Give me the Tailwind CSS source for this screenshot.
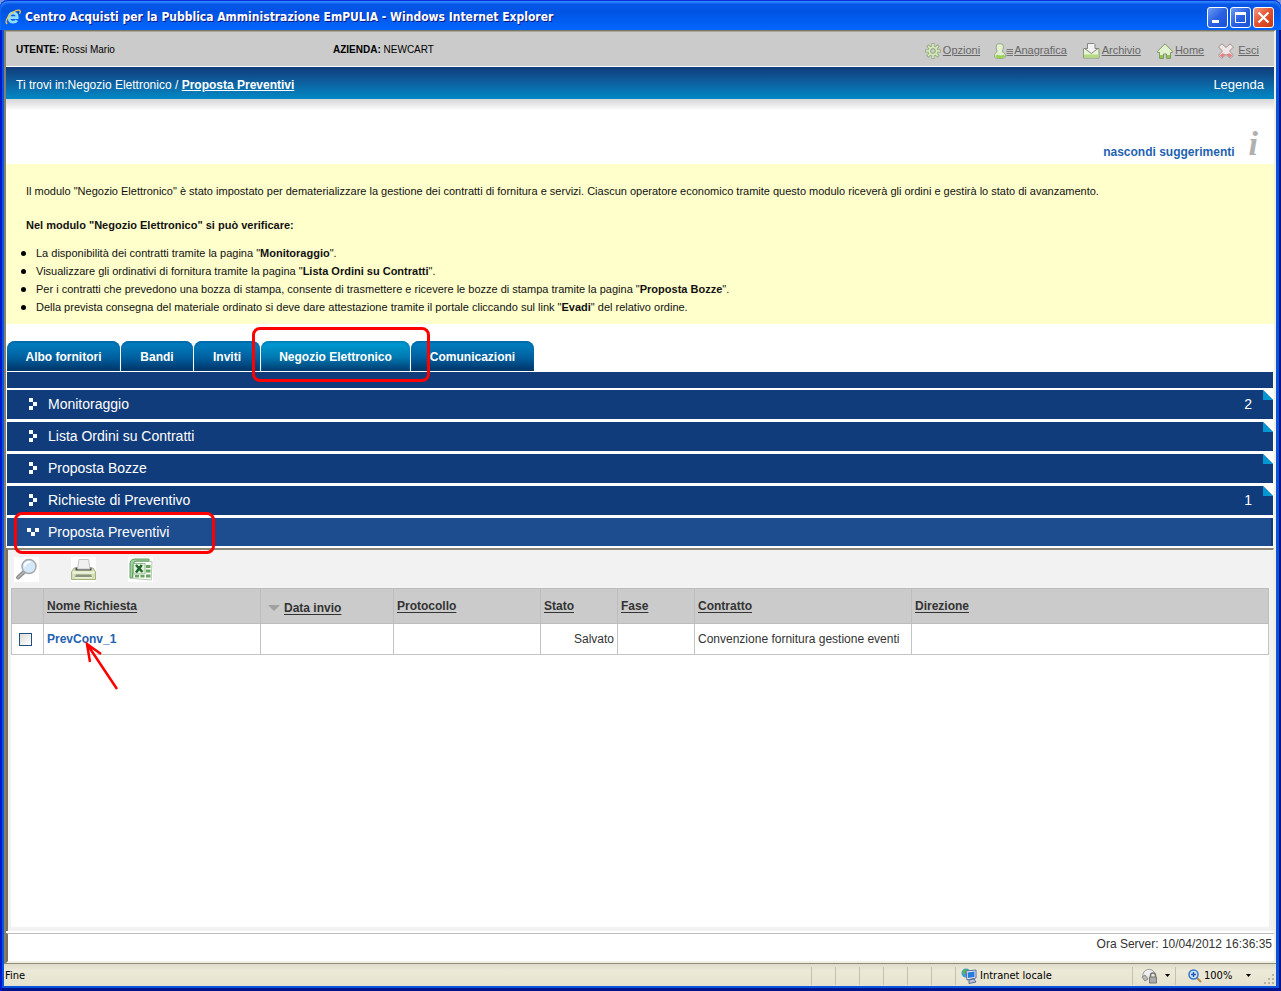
<!DOCTYPE html>
<html lang="it">
<head>
<meta charset="utf-8">
<title>Centro Acquisti per la Pubblica Amministrazione EmPULIA</title>
<script src="https://cdn.jsdelivr.net/npm/@tailwindcss/browser@4"></script>
</head>
<body class="bg-[#7a96df] font-['Liberation_Sans',Arial,sans-serif] text-xs text-black">
<div class="flex min-h-screen flex-col rounded-t-lg bg-[#0855dd] shadow-[inset_2px_0_0_#0019cf,inset_-2px_0_0_#00138c,inset_0_-3px_0_#00138c]">

  <!-- Title bar -->
  <header class="flex h-[30px] shrink-0 items-center rounded-t-lg bg-linear-to-b from-[#0a58e8] from-0% via-[#0054e3] via-40% to-[#0266ff] px-[5px] pt-1 shadow-[inset_0_1px_0_#0831d9,inset_0_3px_2px_#2f87ff]">
    <svg class="mr-1 size-4 shrink-0" viewBox="0 0 16 16" fill="none" aria-hidden="true">
      <path d="M4 8.600H12.200C12.200 5.600 10.500 4 8.100 4S3.900 6 3.900 8.700 5.700 13.200 8.200 13.200c1.800 0 3-.8 3.700-2" stroke="#8fdcff" stroke-width="2.800"/>
      <path d="M2.200 15C-.8 13 3 6.500 8.500 3 12 .8 15.300 .5 15.300 2.500c0 .8-.3 1.600-.8 2.400" stroke="#f5c842" stroke-width="1.300"/>
    </svg>
    <h1 class="flex-1 truncate font-['DejaVu_Sans_Condensed','DejaVu_Sans',sans-serif] text-xs leading-5 font-bold text-white [text-shadow:1px_1px_0_#0a1883]">Centro Acquisti per la Pubblica Amministrazione EmPULIA - Windows Internet Explorer</h1>
    <div class="flex gap-0.5 pr-0.5">
      <button aria-label="Riduci a icona" class="flex size-[21px] items-center justify-center rounded-[3px] border border-white bg-linear-to-br from-[#6f9cf5] via-[#2a61e2] to-[#1c4fd6]"><svg class="size-[19px]" viewBox="0 0 19 19"><path d="M4 12h7v3H4z" fill="#fff"/></svg></button>
      <button aria-label="Ingrandisci" class="flex size-[21px] items-center justify-center rounded-[3px] border border-white bg-linear-to-br from-[#6f9cf5] via-[#2a61e2] to-[#1c4fd6]"><svg class="size-[19px]" viewBox="0 0 19 19" fill="none"><path d="M4.500 5v9.500h10V5" stroke="#fff"/><path d="M4 5.500h11" stroke="#fff" stroke-width="3"/></svg></button>
      <button aria-label="Chiudi" class="flex size-[21px] items-center justify-center rounded-[3px] border border-white bg-linear-to-br from-[#f09a80] via-[#e2502c] to-[#c83a10]"><svg class="size-[19px]" viewBox="0 0 19 19"><path d="M4.500 4.500l10 10M14.500 4.500l-10 10" stroke="#fff" stroke-width="2.200"/></svg></button>
    </div>
  </header>

  <div class="mr-[5px] mb-[5px] ml-1 flex flex-1 flex-col bg-[#ece9d8]">
    <div class="flex flex-1 flex-col border-t border-r-2 border-l-2 border-t-[#7c7766] border-r-[#f1efe2] border-l-[#857f6f] bg-white">

      <!-- User bar -->
      <div class="flex h-[35px] items-center border-t border-[#aca899] bg-[#cbcbcb] text-[10px]">
        <p class="w-[317px] pt-px pl-[10px]"><b>UTENTE:</b> Rossi Mario</p>
        <p class="ml-[10px] flex-1 pt-px"><b>AZIENDA:</b> NEWCART</p>
        <nav class="flex items-center gap-3 pt-[3px] pr-[15px] text-[11px] text-[#666]">
          <a href="#" class="mr-0.5 flex items-center gap-0.5 underline"><svg class="size-4" viewBox="0 0 16 16" fill="none" aria-hidden="true"><g stroke="#8fa67a" stroke-width="3"><path d="M8 0v16M0 8h16M2.400 2.400l11.200 11.200M13.600 2.400L2.400 13.600"/></g><circle cx="8" cy="8" r="5.300" fill="#8fa67a"/><g stroke="#dcecc8" stroke-width="1.600"><path d="M8 .8v14.400M.8 8h14.400M3 3l10 10M13 3L3 13"/></g><circle cx="8" cy="8" r="4.600" fill="#d3eab4"/><circle cx="8" cy="8" r="2.400" fill="#cbcbcb" stroke="#8fa67a"/></svg>Opzioni</a>
          <a href="#" class="flex items-center underline"><svg class="h-4 w-[20px]" viewBox="0 0 20 16" aria-hidden="true"><path d="M4 .8h3C9 .8 9.500 2.500 9.300 5 9.100 7 8.200 7.500 8.400 9c1 .8 3.100.8 3.100 4 0 2-1.500 2.500-5.500 2.500S.5 15 .5 13c0-3 1.500-3.300 2.500-4.300C3.500 7.500 2.200 7 2.200 4.500c0-2 .8-3.700 1.800-3.700z" fill="#e4efd2" stroke="#95a781"/><path d="M2 12.800c2 1.500 6 1.500 8.500 0" stroke="#9ad257" stroke-width="3" fill="none"/><path d="M12.500 6.500H19M12.500 8.500H19M12.500 10.500H19M12.500 12.500H19" stroke="#777"/></svg>Anagrafica</a>
          <a href="#" class="ml-1 flex items-center gap-0.5 underline"><svg class="h-4 w-[17px]" viewBox="0 0 17 16" fill="none" aria-hidden="true"><path d="M.5 5.500h15.500v9.500H.5z" fill="#e8f3d8" stroke="#8a9a7a"/><path d="M1 11.500h14.500v3H1z" fill="#b4dc7d"/><path d="M4.500 5.500h-3L8.300 10.500l6.700-5h-3V1.500l-1-1h-6.500z" fill="#f2f2f2" stroke="#858585"/></svg>Archivio</a>
          <a href="#" class="ml-1 flex items-center gap-0.5 underline"><svg class="size-4" viewBox="0 0 16 16" aria-hidden="true"><path d="M8 .8l7.300 7.300v1.400h-1.800v6h-4V11h-3v4.500h-4v-6H.7V8.100z" fill="#e2f1cd" stroke="#829567"/><path d="M3 12h3v3H3zM10 12h3v3h-3z" fill="#8cc94a"/></svg>Home</a>
          <a href="#" class="ml-0.5 flex items-center gap-1 underline"><svg class="size-4" viewBox="0 0 16 16" aria-hidden="true"><path d="M4 .8L8 4.500 12 .8 15.500 4 11.500 8l4 4.300-3.300 3L8 11.500l-4.200 3.800-3.300-3L4.500 8 .5 4z" fill="#f0e6e6" stroke="#a09090" stroke-linejoin="round"/><path d="M4.800 10.300l-3.300 2L4 14.500 7.500 11.200zM11.200 10.300l3.300 2-2.500 2.200-3.500-3.300z" fill="#e88080"/></svg>Esci</a>
        </nav>
      </div>

      <!-- Breadcrumb -->
      <div class="mt-px flex h-8 items-center justify-between bg-linear-to-b from-[#103c7b] to-[#0089c6] px-[10px] pt-1 text-xs text-white">
        <p>Ti trovi in:Negozio Elettronico / <a href="#" class="font-bold underline">Proposta Preventivi</a></p>
        <a href="#" class="text-[13px]">Legenda</a>
      </div>
      <div class="h-3 bg-linear-to-b from-[#d6d6d6] to-white"></div>
      <div class="flex h-[53px] items-end justify-end gap-[14px] pr-4 pb-1">
        <a href="#" class="text-xs leading-4 font-bold text-[#1f62b0]">nascondi suggerimenti</a>
        <span aria-hidden="true" class="pb-0.5 font-['Liberation_Serif',serif] text-[34px] leading-7 font-bold text-[#b0b0b0] italic">i</span>
      </div>

      <!-- Hints -->
      <section class="h-40 bg-[#ffffcc] pt-5 pl-5 text-[11px] leading-[14px] text-[#111]">
        <p>Il modulo "Negozio Elettronico" è stato impostato per dematerializzare la gestione dei contratti di fornitura e servizi. Ciascun operatore economico tramite questo modulo riceverà gli ordini e gestirà lo stato di avanzamento.</p>
        <p class="mt-5 font-bold">Nel modulo "Negozio Elettronico" si può verificare:</p>
        <ul class="mt-3 leading-[18px]">
          <li class="flex items-center"><i class="mr-[10px] -ml-[5px] size-[5px] rounded-full bg-black"></i><span>La disponibilità dei contratti tramite la pagina "<b>Monitoraggio</b>".</span></li>
          <li class="flex items-center"><i class="mr-[10px] -ml-[5px] size-[5px] rounded-full bg-black"></i><span>Visualizzare gli ordinativi di fornitura tramite la pagina "<b>Lista Ordini su Contratti</b>".</span></li>
          <li class="flex items-center"><i class="mr-[10px] -ml-[5px] size-[5px] rounded-full bg-black"></i><span>Per i contratti che prevedono una bozza di stampa, consente di trasmettere e ricevere le bozze di stampa tramite la pagina "<b>Proposta Bozze</b>".</span></li>
          <li class="flex items-center"><i class="mr-[10px] -ml-[5px] size-[5px] rounded-full bg-black"></i><span>Della prevista consegna del materiale ordinato si deve dare attestazione tramite il portale cliccando sul link "<b>Evadi</b>" del relativo ordine.</span></li>
        </ul>
      </section>

      <!-- Tabs -->
      <nav class="mt-[17px] ml-px flex h-[30px] gap-px text-xs font-bold text-white">
        <button class="w-[113px] rounded-t-lg bg-linear-to-b from-[#0083c4] via-[#00609f] via-55% to-[#003468] pt-px shadow-[inset_0_2px_2px_#0068a8]">Albo fornitori</button>
        <button class="w-[72px] rounded-t-lg bg-linear-to-b from-[#0083c4] via-[#00609f] via-55% to-[#003468] pt-px shadow-[inset_0_2px_2px_#0068a8]">Bandi</button>
        <button class="w-[66px] rounded-t-lg bg-linear-to-b from-[#0083c4] via-[#00609f] via-55% to-[#003468] pt-px shadow-[inset_0_2px_2px_#0068a8]">Inviti</button>
        <button class="relative w-[149px] rounded-t-lg bg-linear-to-b from-[#00a0d8] via-[#0078b0] via-55% to-[#003c70] pt-px shadow-[inset_0_2px_2px_#0080b8]">Negozio Elettronico<span class="absolute -top-[14px] -right-5 -bottom-[11px] -left-[9px] z-10 rounded-lg border-[3px] border-[#f00]"></span></button>
        <button class="w-[123px] rounded-t-lg bg-linear-to-b from-[#0083c4] via-[#00609f] via-55% to-[#003468] pt-px shadow-[inset_0_2px_2px_#0068a8]">Comunicazioni</button>
      </nav>
      <div class="mx-px mt-px h-4 bg-[#103c7b]"></div>

      <!-- Sections -->
      <div class="mx-px mt-0.5 flex flex-col gap-[3px] text-sm leading-[18px] text-white">
        <button class="relative flex h-[29px] items-center bg-[#103c7b] pr-[21px] pb-px pl-[22px] text-left"><svg class="mr-[11px] h-3 w-2" viewBox="0 0 8 12" fill="#fff"><path d="M0 0h4v4H0zM4 4h4v4H4zM0 8h4v4H0z"/></svg><span class="flex-1">Monitoraggio</span><span>2</span><svg class="absolute top-0 right-0 size-[10px]" viewBox="0 0 10 10"><path d="M0 0h10v10z" fill="#fff"/><path d="M0 0l10 10H0z" fill="#0095d3"/></svg></button>
        <button class="relative flex h-[29px] items-center bg-[#103c7b] pr-[21px] pb-px pl-[22px] text-left"><svg class="mr-[11px] h-3 w-2" viewBox="0 0 8 12" fill="#fff"><path d="M0 0h4v4H0zM4 4h4v4H4zM0 8h4v4H0z"/></svg><span class="flex-1">Lista Ordini su Contratti</span><svg class="absolute top-0 right-0 size-[10px]" viewBox="0 0 10 10"><path d="M0 0h10v10z" fill="#fff"/><path d="M0 0l10 10H0z" fill="#0095d3"/></svg></button>
        <button class="relative flex h-[29px] items-center bg-[#103c7b] pr-[21px] pb-px pl-[22px] text-left"><svg class="mr-[11px] h-3 w-2" viewBox="0 0 8 12" fill="#fff"><path d="M0 0h4v4H0zM4 4h4v4H4zM0 8h4v4H0z"/></svg><span class="flex-1">Proposta Bozze</span><svg class="absolute top-0 right-0 size-[10px]" viewBox="0 0 10 10"><path d="M0 0h10v10z" fill="#fff"/><path d="M0 0l10 10H0z" fill="#0095d3"/></svg></button>
        <button class="relative flex h-[29px] items-center bg-[#103c7b] pr-[21px] pb-px pl-[22px] text-left"><svg class="mr-[11px] h-3 w-2" viewBox="0 0 8 12" fill="#fff"><path d="M0 0h4v4H0zM4 4h4v4H4zM0 8h4v4H0z"/></svg><span class="flex-1">Richieste di Preventivo</span><span>1</span><svg class="absolute top-0 right-0 size-[10px]" viewBox="0 0 10 10"><path d="M0 0h10v10z" fill="#fff"/><path d="M0 0l10 10H0z" fill="#0095d3"/></svg></button>
        <button class="relative flex h-7 items-center border-r-2 border-[#103c7b] bg-[#1e4d8f] pl-5 text-left"><svg class="mr-[9px] h-2 w-3" viewBox="0 0 12 8" fill="#fff"><path d="M0 0h4v4H0zM4 4h4v4H4zM8 0h4v4H8z"/></svg><span>Proposta Preventivi</span><span class="absolute -top-[6px] left-[7px] z-10 h-[42px] w-[201px] rounded-lg border-[3px] border-[#f00]"></span></button>
      </div>

      <!-- Results panel -->
      <main class="mt-0.5 flex flex-1 flex-col border-t-2 border-r border-l-2 border-t-[#8b8675] border-r-[#f1efe2] border-l-[#77705f] bg-[#f2f2f2] pr-1 pb-1 pl-[3px]">
        <div class="flex h-[38px] items-center gap-8 pl-[3px]">
          <button aria-label="Cerca" class="flex h-[25px] w-[25px] items-center bg-white"><svg class="size-[25px]" viewBox="0 0 25 25" fill="none"><path d="M10.500 14.500L4 20.500" stroke="#8f8f8f" stroke-width="4" stroke-linecap="round"/><path d="M10.500 14.500L4 20.500" stroke="#b5b5b5" stroke-width="1.500" stroke-linecap="round"/><circle cx="15" cy="9.500" r="7" fill="#d3e9fb" stroke="#a8a8a8" stroke-width="1.500"/><path d="M10.500 9.500a5 5 0 0 1 6-4.500" stroke="#fff" stroke-width="2"/></svg></button>
          <button aria-label="Stampa" class="flex h-[25px] w-[25px] items-center bg-white"><svg class="size-[25px]" viewBox="0 0 25 25"><path d="M3 11h19l2.500 4v7.500H.5V15z" fill="#d3e0b4" stroke="#a4b183"/><path d="M4.500 10.500h16v3h-16z" fill="#4a4a4a"/><path d="M6.500 12L8 2.500h9.500L19 12z" fill="#f0f0f0" stroke="#c4c4c4"/><path d="M1.500 14.500h22v2h-22z" fill="#eef4df"/><path d="M5 17.500h15l1 2.500H4z" fill="#8d927f"/><path d="M4 20h17v1.500H4z" fill="#e9f0d8"/></svg></button>
          <button aria-label="Esporta in Excel" class="flex h-[25px] w-[25px] items-center bg-white"><svg class="size-[25px]" viewBox="0 0 25 25"><path d="M6 4.500h18l-.8 18.500L5 21.500z" fill="#fafcf9" stroke="#b5c9b0"/><path d="M2 7q0-5 5-5h14v2H9Q5 4 5 8l-.5 13H2z" fill="#a4cfa1" stroke="#5f9f60"/><path d="M5.500 6.500h11.500v10.500H5.500z" fill="#e3f2de" stroke="#8fbd8c"/><path d="M8 8l6.500 7M13.800 8L8 15.500" stroke="#23662c" stroke-width="2.500"/><path d="M18 8h4.500v3H18zM18 12.500h4.500v3H18zM7 18h4v2.500H7zM12.500 18h4v2.500h-4zM18 17.500h4.500V20.500H18z" fill="#67a35f"/></svg></button>
        </div>
        <div class="flex-1 bg-white">
          <table class="w-full table-fixed border-collapse text-left text-xs text-[#333]">
            <colgroup><col class="w-8"><col class="w-[217px]"><col class="w-[133px]"><col class="w-[147px]"><col class="w-[77px]"><col class="w-[77px]"><col class="w-[217px]"><col></colgroup>
            <thead>
              <tr class="h-[35px] bg-[#cbcbcb] [&>th]:border [&>th]:border-[#bdbdbd] [&>th]:px-[3px] [&>th]:pb-px">
                <th aria-label="Seleziona"></th>
                <th><a href="#" class="underline underline-offset-2">Nome Richiesta</a></th>
                <th><a href="#" class="flex items-center gap-1 pt-1 pl-1 underline underline-offset-2"><svg class="h-[6px] w-3" viewBox="0 0 12 6"><path d="M0 0h12L6 6z" fill="#a0a0a0"/></svg>Data invio</a></th>
                <th><a href="#" class="underline underline-offset-2">Protocollo</a></th>
                <th><a href="#" class="underline underline-offset-2">Stato</a></th>
                <th><a href="#" class="underline underline-offset-2">Fase</a></th>
                <th><a href="#" class="underline underline-offset-2">Contratto</a></th>
                <th><a href="#" class="underline underline-offset-2">Direzione</a></th>
              </tr>
            </thead>
            <tbody>
              <tr class="h-[31px] [&>td]:border [&>td]:border-[#c4c4c4] [&>td]:px-[3px]">
                <td><input type="checkbox" aria-label="Seleziona PrevConv_1" class="ml-1 block size-[13px] appearance-none border border-[#1c5180] bg-linear-to-br from-[#dcdcd7] to-white"></td>
                <td class="relative"><a href="#" class="font-bold text-[#1f62b0]">PrevConv_1</a><svg class="absolute top-[17px] left-10 z-10 h-[50px] w-9" viewBox="0 0 36 50" fill="none" aria-hidden="true"><path d="M33 48L3 3M6 21L3 3l14 10" stroke="#f00" stroke-width="2.500"/></svg></td>
                <td></td><td></td>
                <td class="text-right">Salvato</td>
                <td></td>
                <td class="whitespace-nowrap">Convenzione fornitura gestione eventi</td>
                <td></td>
              </tr>
            </tbody>
          </table>
        </div>
      </main>

      <footer class="mt-0.5 flex h-[30px] items-start justify-end border-t border-b-2 border-l-2 border-t-[#bdbdbd] border-b-[#f1efe2] border-l-[#77705f] pt-0.5 pr-0.5 text-xs text-[#333]">Ora Server: 10/04/2012 16:36:35</footer>
    </div>

    <!-- Status bar -->
    <div class="flex h-[23px] items-center border-t border-[#8e8b7c] bg-linear-to-b from-[#dedbc9] via-[#ece9d8] via-30% to-[#e6e2cf] pt-px font-['DejaVu_Sans_Condensed','DejaVu_Sans',sans-serif] text-[11px] leading-4">
      <p class="flex-1 pl-px">Fine</p>
      <div class="flex h-[18px]">
        <i class="w-6 border-l border-[#c5c2b0]"></i><i class="w-6 border-l border-[#c5c2b0]"></i><i class="w-6 border-l border-[#c5c2b0]"></i><i class="w-6 border-l border-[#c5c2b0]"></i><i class="w-6 border-l border-[#c5c2b0]"></i><i class="w-6 border-l border-[#c5c2b0]"></i>
      </div>
      <div class="flex h-[18px] w-[177px] items-center gap-[3px] border-l border-[#c5c2b0] pl-[5px]">
        <svg class="size-4" viewBox="0 0 16 16" aria-hidden="true"><circle cx="5" cy="5" r="4.500" fill="#3c9cde"/><path d="M2 2l4-1-1 4-3 2z" fill="#58b947"/><path d="M5 3l10-1v8L6 12z" fill="#e8eef8" stroke="#5b6c93"/><path d="M6.500 4.500l7-1v5.500l-6.500 1z" fill="#257be0"/><path d="M8 12l5-1 2 3-7 1.500z" fill="#b8c4da" stroke="#5b6c93"/></svg>
        Intranet locale
      </div>
      <button aria-label="Protezione" class="flex h-[18px] w-[43px] items-center gap-[6px] border-l border-[#c5c2b0] pl-2"><svg class="h-4 w-[18px]" viewBox="0 0 18 16"><path d="M2 9a6 6 0 0 1 12-3" fill="#eee" stroke="#999"/><path d="M1 9l3-2 3 4-3 2z" fill="#bbb" stroke="#888"/><path d="M9.500 9V7.500a2.500 2.500 0 0 1 5 0V9" fill="none" stroke="#777" stroke-width="1.500"/><path d="M8.500 9h7v6h-7z" fill="#aaa" stroke="#777"/></svg><svg class="h-[3px] w-[5px]" viewBox="0 0 5 3"><path d="M0 0h5L2.500 3z"/></svg></button>
      <button class="flex h-[18px] w-[101px] items-center gap-[2px] border-l border-[#c5c2b0] pl-3"><svg class="size-[14px]" viewBox="0 0 14 14" fill="none"><path d="M8 8l5 5" stroke="#b88a4a" stroke-width="2"/><circle cx="5.500" cy="5.500" r="4.500" fill="#d5eafc" stroke="#3674c8" stroke-width="1.500"/><path d="M3 5.500h5M5.500 3v5" stroke="#2456b4" stroke-width="1.500"/></svg>100%<svg class="ml-3 h-[3px] w-[5px]" viewBox="0 0 5 3"><path d="M0 0h5L2.500 3z"/></svg><svg class="mt-[7px] mr-px ml-auto size-[11px] shrink-0" viewBox="0 0 11 11" fill="#b8b4a2"><path d="M8 0h2v2H8zM4 4h2v2H4zM8 4h2v2H8zM0 8h2v2H0zM4 8h2v2H4zM8 8h2v2H8z"/></svg></button>
    </div>
  </div>
</div>
</body>
</html>
